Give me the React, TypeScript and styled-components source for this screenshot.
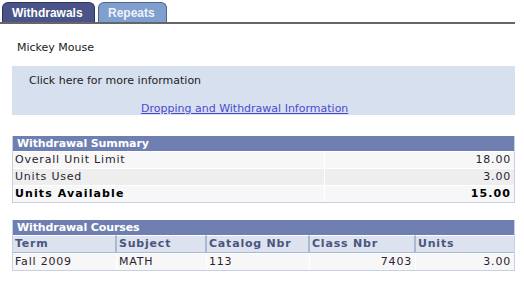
import React from "react";
import styled, { createGlobalStyle } from "styled-components";

const Global = createGlobalStyle`
  html, body { margin: 0; padding: 0; background: #fff; }
  body { font-family: "DejaVu Sans", Verdana, sans-serif; font-size: 11px; color: #222; }
`;

const Page = styled.div`
  width: 524px;
  height: 282px;
  overflow: hidden;
`;

const TabBar = styled.div`
  display: flex;
  gap: 3px;
  padding: 2px 0 0 2px;
  width: 513px;
  border-bottom: 2px solid #666;
`;

const Tab = styled.div<{ $active?: boolean }>`
  height: 20px;
  box-sizing: border-box;
  display: flex;
  align-items: center;
  font-family: "Liberation Sans", Arial, sans-serif;
  font-weight: bold;
  font-size: 12px;
  color: ${(p) => (p.$active ? "#fff" : "#eef2fa")};
  background: ${(p) => (p.$active ? "#4a5488" : "#7f9fcf")};
  border: 1px solid ${(p) => (p.$active ? "#2e3660" : "#50648f")};
  border-bottom: none;
  border-radius: 6px 6px 0 0;
  width: ${(p) => (p.$active ? "93px" : "69px")};
  padding-left: 9px;
`;

const Content = styled.div`
  padding: 0 9px 0 12px;
  width: 503px;
`;

const Name = styled.div`
  padding: 17px 0 0 5px;
  line-height: 13px;
  height: 25px;
  color: #222;
`;

const InfoBox = styled.div`
  background: #d7e0ef;
  height: 49px;
  box-sizing: border-box;
  padding: 8px 0 0 17px;
  line-height: 13px;
`;

const InfoLink = styled.a`
  display: block;
  margin: 15px 0 0 112px;
  color: #4b4bd0;
  text-decoration: underline;
`;

const Grid = styled.div<{ $cols: string; $top: number }>`
  margin-top: ${(p) => p.$top}px;
  display: grid;
  grid-template-columns: ${(p) => p.$cols};
  border: 1px solid #c6d0e4;
  border-top: none;
  letter-spacing: 0.8px;
`;

const Title = styled.div`
  grid-column: 1 / -1;
  background: #6f7fb1;
  color: #fff;
  font-weight: bold;
  height: 15px;
  line-height: 15px;
  padding-left: 4px;
  letter-spacing: -0.1px;
`;

const Cell = styled.div<{ $alt?: boolean; $right?: boolean; $bold?: boolean; $last?: boolean }>`
  background: ${(p) => (p.$alt ? "#eeeeee" : "#f7f7f7")};
  height: 16px;
  line-height: 16px;
  padding: 0 3px 0 2px;
  text-align: ${(p) => (p.$right ? "right" : "left")};
  font-weight: ${(p) => (p.$bold ? "bold" : "normal")};
  letter-spacing: ${(p) => (p.$bold ? "1.1px" : "0.8px")};
  color: ${(p) => (p.$bold ? "#000" : "#2a2230")};
  border-right: ${(p) => (p.$last ? "none" : "1px solid #fff")};
  border-top: 1px solid #fff;
  overflow: hidden;
  white-space: nowrap;
`;

const HeadCell = styled.div<{ $last?: boolean }>`
  background: #dce3ee;
  height: 16px;
  line-height: 16px;
  padding-left: 2px;
  font-weight: bold;
  color: #4a5580;
  border-top: 1px solid #fff;
  border-right: ${(p) => (p.$last ? "none" : "2px solid #a9b8d6")};
  border-bottom: 1px solid #a9b8d6;
  white-space: nowrap;
  overflow: hidden;
`;

const summary = [
  { label: "Overall Unit Limit", value: "18.00" },
  { label: "Units Used", value: "3.00" },
  { label: "Units Available", value: "15.00", bold: true },
];

const headers = ["Term", "Subject", "Catalog Nbr", "Class Nbr", "Units"];
const row = [
  { v: "Fall 2009" },
  { v: "MATH" },
  { v: "113" },
  { v: "7403", right: true },
  { v: "3.00", right: true },
];

export default function App() {
  return (
    <Page>
      <Global />
      <TabBar>
        <Tab $active>Withdrawals</Tab>
        <Tab>Repeats</Tab>
      </TabBar>
      <Content>
        <Name>Mickey Mouse</Name>
        <InfoBox>
          Click here for more information
          <InfoLink href="#">Dropping and Withdrawal Information</InfoLink>
        </InfoBox>
        <Grid $cols="312px 1fr" $top={21}>
          <Title>Withdrawal Summary</Title>
          {summary.map((s, i) => (
            <React.Fragment key={s.label}>
              <Cell $alt={i === 1} $bold={s.bold}>{s.label}</Cell>
              <Cell $alt={i === 1} $bold={s.bold} $right $last>{s.value}</Cell>
            </React.Fragment>
          ))}
        </Grid>
        <Grid $cols="104px 90px 103px 106px 1fr" $top={17}>
          <Title>Withdrawal Courses</Title>
          {headers.map((h, i) => (
            <HeadCell key={h} $last={i === headers.length - 1}>{h}</HeadCell>
          ))}
          {row.map((c, i) => (
            <Cell key={i} $right={c.right} $last={i === row.length - 1}>{c.v}</Cell>
          ))}
        </Grid>
      </Content>
    </Page>
  );
}
